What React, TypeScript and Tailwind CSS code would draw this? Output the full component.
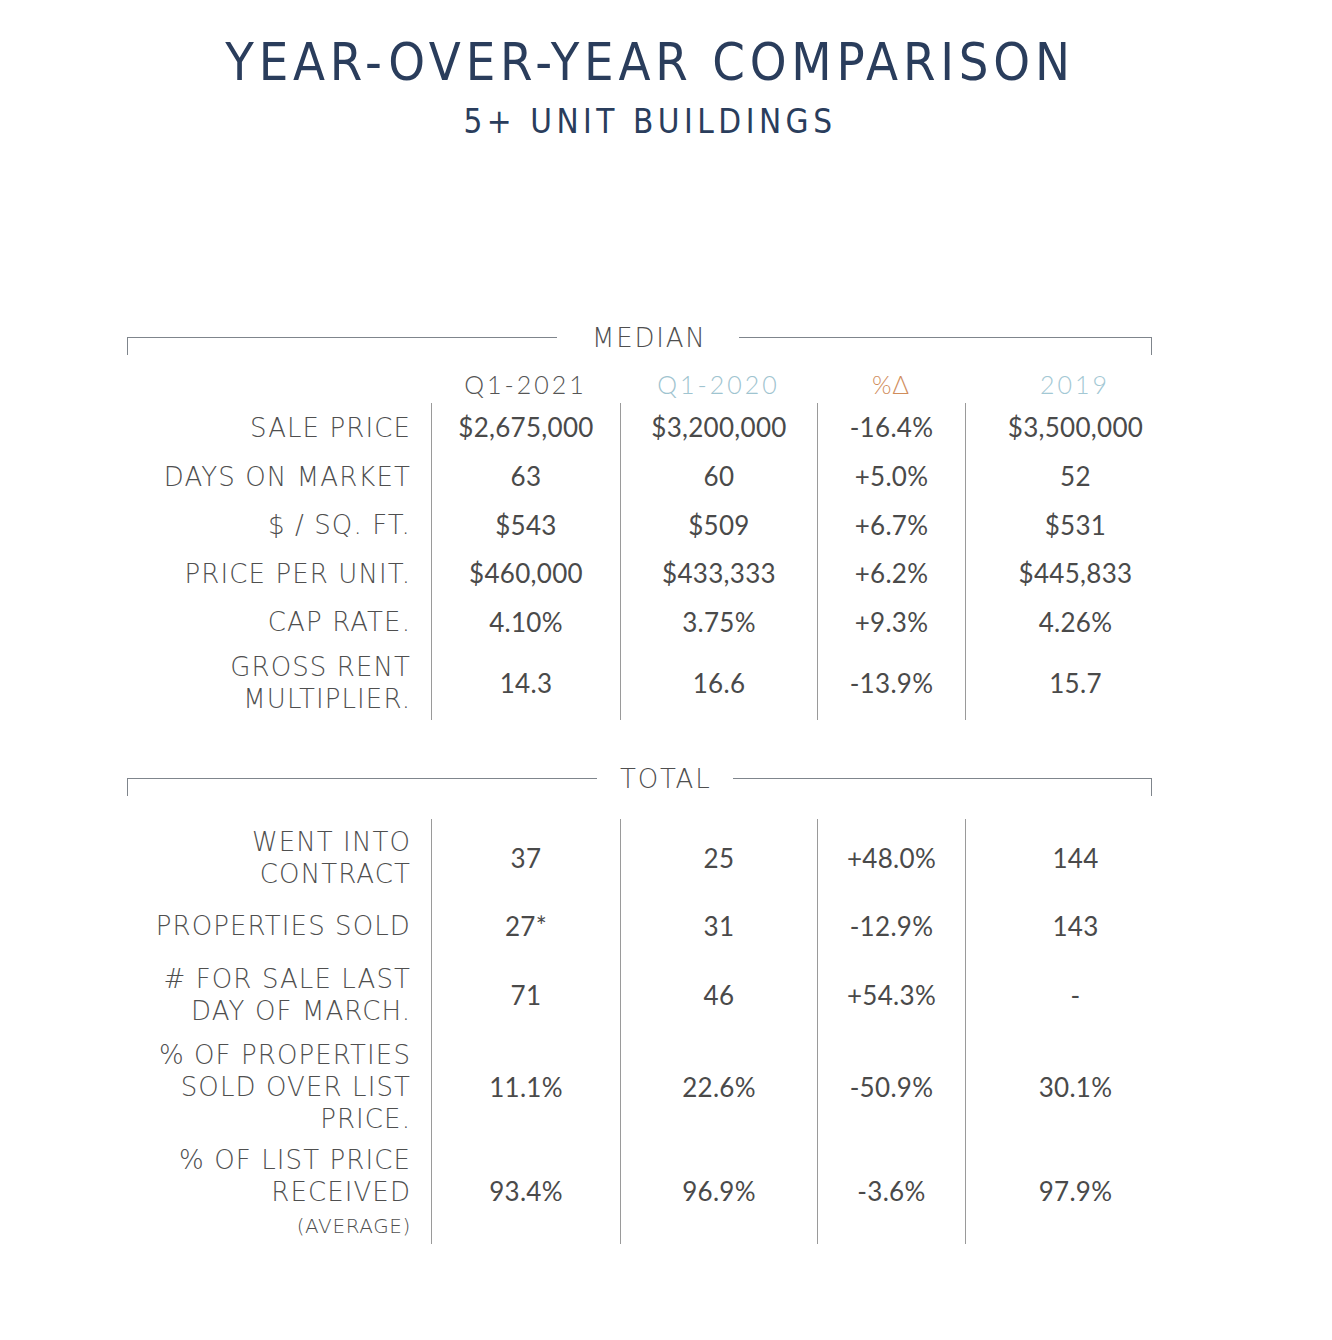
import React from "react";

const lato = { fontFamily: "Lato, 'Open Sans', sans-serif" };
const label = { fontFamily: "'DejaVu Sans', 'Noto Sans', sans-serif", fontWeight: 200 };

type Row = { label: React.ReactNode; h: string; vals: string[] };

const median: Row[] = [
  { label: "SALE PRICE", h: "h-[49px]", vals: ["$2,675,000", "$3,200,000", "-16.4%", "$3,500,000"] },
  { label: "DAYS ON MARKET", h: "h-[49px]", vals: ["63", "60", "+5.0%", "52"] },
  { label: "$ / SQ. FT.", h: "h-[48px]", vals: ["$543", "$509", "+6.7%", "$531"] },
  { label: "PRICE PER UNIT.", h: "h-[49px]", vals: ["$460,000", "$433,333", "+6.2%", "$445,833"] },
  { label: "CAP RATE.", h: "h-[48px]", vals: ["4.10%", "3.75%", "+9.3%", "4.26%"] },
  { label: <>GROSS RENT<br />MULTIPLIER.</>, h: "h-[74px]", vals: ["14.3", "16.6", "-13.9%", "15.7"] },
];

const total: Row[] = [
  { label: <>WENT INTO<br />CONTRACT</>, h: "h-[78px]", vals: ["37", "25", "+48.0%", "144"] },
  { label: "PROPERTIES SOLD", h: "h-[58px]", vals: ["27*", "31", "-12.9%", "143"] },
  { label: <># FOR SALE LAST<br />DAY OF MARCH.</>, h: "h-[80px]", vals: ["71", "46", "+54.3%", "-"] },
  { label: <>% OF PROPERTIES<br />SOLD OVER LIST<br />PRICE.</>, h: "h-[104px]", vals: ["11.1%", "22.6%", "-50.9%", "30.1%"] },
  {
    label: (
      <>
        % OF LIST PRICE
        <br />
        RECEIVED
        <br />
        <span className="text-[20px] leading-[26px] tracking-[0.6px]">(AVERAGE)</span>
      </>
    ),
    h: "h-[105px]",
    vals: ["93.4%", "96.9%", "-3.6%", "97.9%"],
  },
];

const grid = "grid grid-cols-[304px_189px_197px_148px_220px]";

function Rows({ rows }: { rows: Row[] }) {
  return (
    <div className={grid}>
      {rows.map((r, i) => (
        <React.Fragment key={i}>
          <div
            className={`${r.h} flex items-center justify-end pr-[20px] text-right text-[26px] leading-[32px] text-[#4f4f4f] tracking-[1.1px]`}
            style={label}
          >
            <div>{r.label}</div>
          </div>
          {r.vals.map((v, j) => (
            <div
              key={j}
              className={`${r.h} flex items-center justify-center text-[26px] tracking-[0.3px] text-[#4a4a4a] ${j < 4 ? "border-l border-[#9a9a9a]" : ""}`}
              style={lato}
            >
              {v}
            </div>
          ))}
        </React.Fragment>
      ))}
    </div>
  );
}

function Bracket({ text, left, gapL, gapR }: { text: string; left: string; gapL: string; gapR: string }) {
  return (
    <div className="flex items-start w-[1025px]">
      <div className={`${left} h-[18px] mt-[15px] border-t border-l border-[#7f858c]`} />
      <div className={`${gapL} ${gapR} text-[26px] leading-[32px] tracking-[1.8px] text-[#4f4f4f]`} style={label}>
        {text}
      </div>
      <div className="flex-1 h-[18px] mt-[15px] border-t border-r border-[#7f858c]" />
    </div>
  );
}

const titleFont = { fontFamily: "'Liberation Sans Narrow', 'DejaVu Sans Condensed', 'Open Sans', sans-serif", fontStretch: "condensed" };

export default function App() {
  return (
    <div className="w-[1332px] h-[1340px] bg-white relative">
      <div className="flex flex-col items-center w-[1300px] pt-[34px]">
        <div className="text-[52px] leading-[56px] tracking-[4.8px] text-[#2a3d5c]" style={titleFont}>
          YEAR-OVER-YEAR COMPARISON
        </div>
        <div className="mt-[12px] text-[33px] leading-[40px] tracking-[4.5px] text-[#2a3d5c]" style={titleFont}>
          5+ UNIT BUILDINGS
        </div>
      </div>

      <div className="ml-[127px] mt-[180px]">
        <Bracket text="MEDIAN" left="w-[430px]" gapL="pl-[35px]" gapR="pr-[32px]" />
        <div className={`${grid} h-[37px] mt-[11px] items-center`}>
          <div />
          <div className="text-center text-[25px] tracking-[3px] text-[#555]" style={{ ...lato, fontWeight: 300 }}>Q1-2021</div>
          <div className="text-center text-[25px] tracking-[3px] text-[#9fc4d0]" style={{ ...lato, fontWeight: 300 }}>Q1-2020</div>
          <div className="text-center text-[25px] tracking-[1px] text-[#d08d5c]" style={{ ...lato, fontWeight: 300 }}>%Δ</div>
          <div className="text-center text-[25px] tracking-[3px] text-[#a3c8d4]" style={{ ...lato, fontWeight: 300 }}>2019</div>
        </div>
        <Rows rows={median} />

        <div className="mt-[43px]">
          <Bracket text="TOTAL" left="w-[470px]" gapL="pl-[23px]" gapR="pr-[22px]" />
        </div>
        <div className="mt-[23px]">
          <Rows rows={total} />
        </div>
      </div>
    </div>
  );
}
